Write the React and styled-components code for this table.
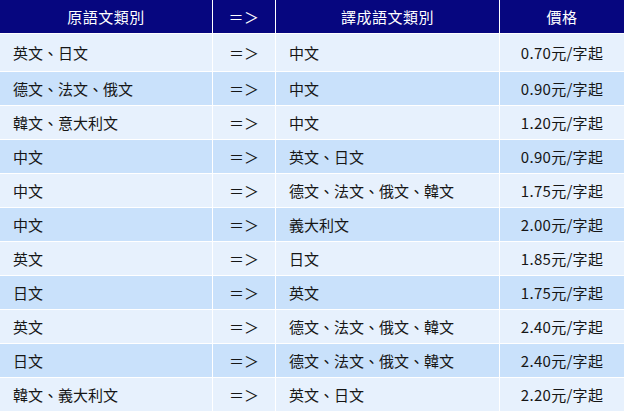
import styled, { createGlobalStyle } from "styled-components"

const GlobalStyle = createGlobalStyle`
  html, body {
    margin: 0;
    padding: 0;
    background: #ffffff;
  }
  body {
    font-family: "Noto Sans CJK TC", "Noto Sans", sans-serif;
  }
`

const rows = [
    ["英文、日文", "中文", "0.70元/字起"],
    ["德文、法文、俄文", "中文", "0.90元/字起"],
    ["韓文、意大利文", "中文", "1.20元/字起"],
    ["中文", "英文、日文", "0.90元/字起"],
    ["中文", "德文、法文、俄文、韓文", "1.75元/字起"],
    ["中文", "義大利文", "2.00元/字起"],
    ["英文", "日文", "1.85元/字起"],
    ["日文", "英文", "1.75元/字起"],
    ["英文", "德文、法文、俄文、韓文", "2.40元/字起"],
    ["日文", "德文、法文、俄文、韓文", "2.40元/字起"],
    ["韓文、義大利文", "英文、日文", "2.20元/字起"],
]

const PriceTable = () => {
    return (
        <Table>
            <HeadCell>原語文類別</HeadCell>
            <HeadCell>＝＞</HeadCell>
            <HeadCell>譯成語文類別</HeadCell>
            <HeadCell>價格</HeadCell>
            {rows.map((r, i) => {
                const alt = i % 2 === 1
                return [
                    <Cell key={i + "a"} alt={alt}>{r[0]}</Cell>,
                    <Cell key={i + "b"} alt={alt} center>＝＞</Cell>,
                    <Cell key={i + "c"} alt={alt}>{r[1]}</Cell>,
                    <Cell key={i + "d"} alt={alt} center price>{r[2]}</Cell>,
                ]
            })}
        </Table>
    )
}

const Table = styled.div`
    display: grid;
    grid-template-columns: 212px 62px 223px 1fr;
    grid-template-rows: 33px 37px;
    grid-auto-rows: 33px;
    gap: 1px;
    width: 624px;
    background: #ffffff;
`
const HeadCell = styled.div`
    background: #06067f;
    color: #ffffff;
    font-size: 15px;
    display: flex;
    align-items: center;
    justify-content: center;
    letter-spacing: 0.5px;
`
const Cell = styled.div`
    background: ${p => p.alt ? "#c9e1fb" : "#e7f1fd"};
    color: #161616;
    font-size: 15px;
    display: flex;
    align-items: center;
    justify-content: ${p => p.center ? "center" : "flex-start"};
    padding-left: ${p => p.center ? "0" : "13px"};
    letter-spacing: ${p => p.price ? "0.3px" : "0"};
`

export default function App() {
    return (
        <>
            <GlobalStyle />
            <PriceTable />
        </>
    )
}
